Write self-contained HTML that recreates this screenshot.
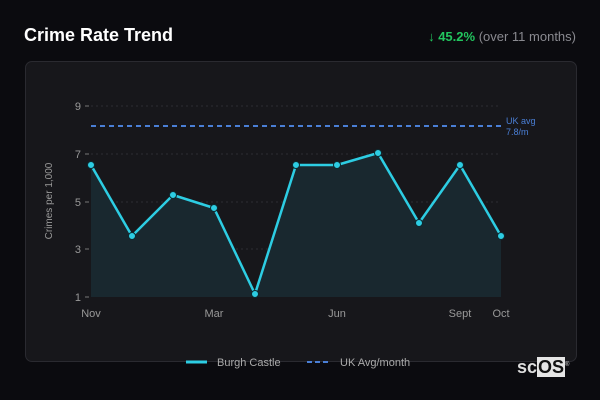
<!DOCTYPE html>
<html><head><meta charset="utf-8"><style>
html,body{margin:0;padding:0;width:600px;height:400px;background:#0b0b0f;overflow:hidden;font-family:"Liberation Sans","DejaVu Sans",sans-serif}
.t{position:absolute;left:24px;top:25px;color:#fff;font-weight:bold;font-size:18px}
.r{position:absolute;right:24px;top:29px;font-size:13px;color:#8a8a90}
.r b{color:#22c55e}
.card{position:absolute;left:25px;top:61px;width:550px;height:299px;border:1px solid #2a2a30;border-radius:7px;background:#17171b}
svg{position:absolute;left:0;top:0}
.logo{position:absolute;left:517px;top:357px;color:#ddd;font-weight:bold;font-size:18px}
.logo span{background:#e5e5e5;color:#111;padding:0 1px}
</style></head><body>
<div class="t">Crime Rate Trend</div>
<div class="r"><b>↓ 45.2%</b> (over 11 months)</div>
<div class="card"></div>
<svg width="600" height="400" font-family="Liberation Sans, sans-serif">
<g stroke="#2c2c33" stroke-dasharray="2,3" stroke-width="1">
<line x1="91" x2="501" y1="106" y2="106"/><line x1="91" x2="501" y1="154" y2="154"/><line x1="91" x2="501" y1="202" y2="202"/><line x1="91" x2="501" y1="249" y2="249"/>
</g>
<g stroke="#777" stroke-width="1"><line x1="85" x2="89" y1="106" y2="106"/><line x1="85" x2="89" y1="154" y2="154"/><line x1="85" x2="89" y1="202" y2="202"/><line x1="85" x2="89" y1="249" y2="249"/><line x1="85" x2="89" y1="297" y2="297"/></g>
<g fill="#999" font-size="11" text-anchor="end"><text x="81" y="110">9</text><text x="81" y="158">7</text><text x="81" y="206">5</text><text x="81" y="253">3</text><text x="81" y="301">1</text></g>
<text x="52" y="201" fill="#999" font-size="10" text-anchor="middle" transform="rotate(-90 52 201)">Crimes per 1,000</text>
<line x1="91" x2="501" y1="126" y2="126" stroke="#4a7fd6" stroke-width="2" stroke-dasharray="5,4"/>
<text x="506" y="124" fill="#4a7fd6" font-size="9">UK avg</text><text x="506" y="135" fill="#4a7fd6" font-size="9">7.8/m</text>
<path d="M91,165 L132,236 L173,195 L214,208 L255,294 L296,165 L337,165 L378,153 L419,223 L460,165 L501,236 L501,297 L91,297Z" fill="#19282f"/>
<polyline points="91,165 132,236 173,195 214,208 255,294 296,165 337,165 378,153 419,223 460,165 501,236" fill="none" stroke="#2dcde3" stroke-width="2.5" stroke-linejoin="round"/>
<g fill="#2dcde3" stroke="#0d2a30" stroke-width="1"><circle cx="91" cy="165" r="3.5"/><circle cx="132" cy="236" r="3.5"/><circle cx="173" cy="195" r="3.5"/><circle cx="214" cy="208" r="3.5"/><circle cx="255" cy="294" r="3.5"/><circle cx="296" cy="165" r="3.5"/><circle cx="337" cy="165" r="3.5"/><circle cx="378" cy="153" r="3.5"/><circle cx="419" cy="223" r="3.5"/><circle cx="460" cy="165" r="3.5"/><circle cx="501" cy="236" r="3.5"/></g>
<g fill="#999" font-size="11" text-anchor="middle"><text x="91" y="317">Nov</text><text x="214" y="317">Mar</text><text x="337" y="317">Jun</text><text x="460" y="317">Sept</text><text x="501" y="317">Oct</text></g>
<line x1="186" x2="207" y1="362" y2="362" stroke="#2dcde3" stroke-width="3"/>
<text x="217" y="366" fill="#aaa" font-size="11">Burgh Castle</text>
<line x1="307" x2="330" y1="362" y2="362" stroke="#4a7fd6" stroke-width="2" stroke-dasharray="5,3"/>
<text x="340" y="366" fill="#aaa" font-size="11">UK Avg/month</text>
</svg>
<div class="logo">sc<span>OS</span><sup style="font-size:6px;font-weight:normal">®</sup></div>
</body></html>
